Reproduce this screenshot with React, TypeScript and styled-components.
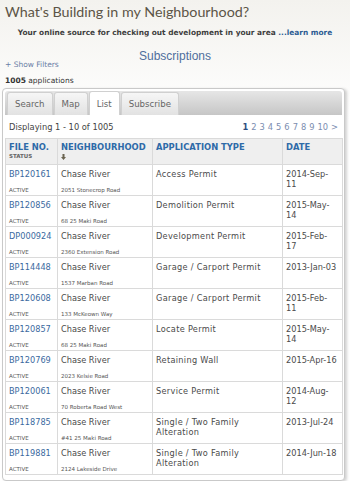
import styled, { createGlobalStyle } from "styled-components";

const GlobalStyle = createGlobalStyle`
  html {
    background: #fff;
  }
  body {
    margin: 0;
    background: #fff linear-gradient(#f3f2ee 0px, #ffffff 120px) no-repeat;
    background-size: 100% 120px;
    font-family: "DejaVu Sans", Verdana, sans-serif;
    color: #444;
  }
`;

const Page = styled.div`
  width: 350px;
`;

const Title = styled.h1`
  margin: 0;
  padding: 1px 0 0 5px;
  font-family: Lato, "Open Sans", sans-serif;
  font-weight: 400;
  font-size: 14.3px;
  line-height: 22px;
  color: #5c5547;
`;

const Tagline = styled.p`
  margin: 5px 0 0;
  text-align: center;
  font-size: 7.4px;
  font-weight: bold;
  color: #3e3e3e;
  line-height: 10px;
`;

const Link = styled.a`
  color: #2d5c93;
  text-decoration: none;
`;

const Heading = styled.h2`
  margin: 11px 0 0;
  text-align: center;
  font-family: "Liberation Sans", Arial, sans-serif;
  font-weight: 400;
  font-size: 12px;
  line-height: 14px;
  color: #4f6e9c;
`;

const Filters = styled.div`
  padding-left: 5px;
  margin-top: -3px;
  font-size: 7.5px;
  line-height: 10px;
  color: #6b7fa6;
`;

const Count = styled.div`
  padding-left: 5px;
  margin-top: 6px;
  font-size: 7.5px;
  line-height: 10px;
  color: #333;
  b {
    font-weight: bold;
  }
`;

const Panel = styled.div`
  margin: 2px 5px 0 2px;
  border: 1px solid #c9c9c9;
  border-radius: 4px;
  background: #fff;
  box-shadow: 2px 1px 3px rgba(0, 0, 0, 0.18);
  padding: 2px 2px 5px;
`;

const TabBar = styled.div`
  display: flex;
  align-items: flex-end;
  height: 24px;
  padding: 0 2px;
  border-radius: 3px 3px 0 0;
  background: linear-gradient(#e6e6e6, #c6c6c6);
`;

const Tab = styled.div<{ $active?: boolean }>`
  height: ${(p) => (p.$active ? "23px" : "22px")};
  padding: 0 7px;
  display: flex;
  align-items: center;
  margin-right: 1px;
  border: 1px solid #d0d0d0;
  border-bottom: none;
  border-radius: 3px 3px 0 0;
  background: ${(p) => (p.$active ? "#fff" : "linear-gradient(#f6f6f6, #e2e2e2)")};
  color: #666;
  font-size: 8.6px;
`;

const Toolbar = styled.div`
  display: flex;
  justify-content: space-between;
  align-items: center;
  height: 23px;
  padding: 0 4px 0 4px;
  font-size: 8.3px;
  color: #444;
`;

const Pager = styled.div`
  display: flex;
  gap: 3px;
  color: #7b8db0;
  font-size: 8.3px;
  b {
    color: #2d4f80;
    font-weight: bold;
  }
`;

const Table = styled.table`
  width: 337px;
  border-collapse: collapse;
  table-layout: fixed;
`;

const Th = styled.th<{ $w: number }>`
  box-sizing: border-box;
  width: ${(p) => p.$w}px;
  text-align: left;
  vertical-align: top;
  background: #efefef;
  border: 1px solid #dadada;
  padding: 4px 3px 3px;
  height: 26px;
  color: #2e6aa8;
  font-size: 8.4px;
  font-weight: bold;
  line-height: 9px;
`;

const Sub = styled.div`
  font-size: 5.5px;
  color: #666;
  line-height: 8px;
`;

const SortArrow = styled.svg`
  display: block;
  margin-top: 2px;
  width: 5px;
  height: 6px;
`;

const Td = styled.td<{ $spaced?: boolean }>`
  vertical-align: top;
  border: 1px solid #dadada;
  padding: 4px 3px 0;
  height: 26px;
  font-size: 8.2px;
  line-height: 10px;
  color: #4a4a4a;
  letter-spacing: ${(p) => (p.$spaced ? "0.3px" : "0")};
`;

const FileLink = styled.a`
  color: #3a6aa0;
  text-decoration: none;
`;

const Small = styled.div`
  margin-top: 7px;
  font-size: 5.5px;
  line-height: 8px;
  color: #555;
`;

type Row = { file: string; address: string; type: string; date: string; wrap?: boolean };

const rows: Row[] = [
  { file: "BP120161", address: "2051 Stonecrop Road", type: "Access Permit", date: "2014-Sep-11", wrap: true },
  { file: "BP120856", address: "68 25 Maki Road", type: "Demolition Permit", date: "2015-May-14", wrap: true },
  { file: "DP000924", address: "2360 Extension Road", type: "Development Permit", date: "2015-Feb-17", wrap: true },
  { file: "BP114448", address: "1537 Marban Road", type: "Garage / Carport Permit", date: "2013-Jan-03" },
  { file: "BP120608", address: "133 McKeown Way", type: "Garage / Carport Permit", date: "2015-Feb-11", wrap: true },
  { file: "BP120857", address: "68 25 Maki Road", type: "Locate Permit", date: "2015-May-14", wrap: true },
  { file: "BP120769", address: "2023 Kelsie Road", type: "Retaining Wall", date: "2015-Apr-16" },
  { file: "BP120061", address: "70 Roberta Road West", type: "Service Permit", date: "2014-Aug-12", wrap: true },
  { file: "BP118785", address: "#41 25 Maki Road", type: "Single / Two Family Alteration", date: "2013-Jul-24" },
  { file: "BP119881", address: "2124 Lakeside Drive", type: "Single / Two Family Alteration", date: "2014-Jun-18" },
];

const DateText = ({ date, wrap }: { date: string; wrap?: boolean }) => {
  if (!wrap) return <>{date}</>;
  const cut = date.lastIndexOf("-") + 1;
  return (
    <>
      {date.slice(0, cut)}
      <br />
      {date.slice(cut)}
    </>
  );
};

export default function App() {
  return (
    <Page>
      <GlobalStyle />
      <Title>What's Building in my Neighbourhood?</Title>
      <Tagline>
        Your online source for checking out development in your area <Link>...learn more</Link>
      </Tagline>
      <Heading>Subscriptions</Heading>
      <Filters>+ Show Filters</Filters>
      <Count>
        <b>1005</b> applications
      </Count>
      <Panel>
        <TabBar>
          <Tab>Search</Tab>
          <Tab>Map</Tab>
          <Tab $active>List</Tab>
          <Tab>Subscribe</Tab>
        </TabBar>
        <Toolbar>
          <span>Displaying 1 - 10 of 1005</span>
          <Pager>
            <b>1</b>
            {[2, 3, 4, 5, 6, 7, 8, 9, 10].map((n) => (
              <span key={n}>{n}</span>
            ))}
            <span>&gt;</span>
          </Pager>
        </Toolbar>
        <Table>
          <thead>
            <tr>
              <Th $w={52}>
                FILE NO.
                <Sub>STATUS</Sub>
              </Th>
              <Th $w={95}>
                NEIGHBOURHOOD
                <SortArrow viewBox="0 0 5 6">
                  <path d="M1.5 0h2v3h1.5L2.5 6 0 3h1.5z" fill="#6b6450" />
                </SortArrow>
              </Th>
              <Th $w={130}>APPLICATION TYPE</Th>
              <Th $w={60}>DATE</Th>
            </tr>
          </thead>
          <tbody>
            {rows.map((r) => (
              <tr key={r.file}>
                <Td>
                  <FileLink>{r.file}</FileLink>
                  <Small>ACTIVE</Small>
                </Td>
                <Td>
                  Chase River
                  <Small>{r.address}</Small>
                </Td>
                <Td $spaced>{r.type}</Td>
                <Td>
                  <DateText date={r.date} wrap={r.wrap} />
                </Td>
              </tr>
            ))}
          </tbody>
        </Table>
      </Panel>
    </Page>
  );
}
